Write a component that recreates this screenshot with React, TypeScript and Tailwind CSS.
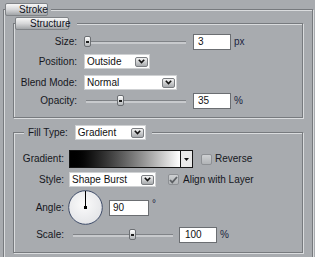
import React from 'react';

const fieldsetCls =
  'm-0 min-w-0 border border-[#777a7e] p-0 shadow-[inset_1px_1px_0_#dadcde,1px_1px_0_#dadcde]';

const TabButton = ({ children, className }: { children: React.ReactNode; className: string }) => (
  <div
    className={`flex h-[13px] items-center whitespace-nowrap rounded-[2px] border border-[#808387] bg-linear-to-b from-[#f8f8f8] via-[#d6d7d9] to-[#a2a5a8] text-[10px] text-[#10131c] ${className}`}
  >
    {children}
  </div>
);

const ArrowButton = () => (
  <span className="flex h-[10px] w-[13px] items-center justify-center rounded-[2px] border border-[#7b7e82] bg-linear-to-b from-[#f4f4f4] to-[#a8abae]">
    <svg width="7" height="5" viewBox="0 0 7 5">
      <path d="M0.8 0.8 L3.5 3.6 L6.2 0.8" stroke="#111" strokeWidth="1.6" fill="none" />
    </svg>
  </span>
);

const Select = ({ value, className }: { value: string; className: string }) => (
  <div className={`flex h-[15px] items-center justify-between border border-[#cfd1d3] bg-white pl-[2px] pr-[1px] ${className}`}>
    <span className="text-[10px] text-[#111]">{value}</span>
    <ArrowButton />
  </div>
);

const Slider = ({ pos, className }: { pos: number; className: string }) => (
  <div className={`relative h-[12px] w-[102px] ${className}`}>
    <div className="absolute left-[2px] right-0 top-[5px] h-[3px] border-t border-[#808387] bg-[#c8cacd]" />
    <div
      className="absolute top-0 flex h-[11px] w-[7px] items-center rounded-[2px] border border-[#6c6f73] bg-linear-to-b from-white to-[#b3b6b9] px-[1px]"
      style={{ left: pos }}
    >
      <div className="h-[2px] w-full bg-[#1d1d1d]" />
    </div>
  </div>
);

const Field = ({ value, className }: { value: string; className: string }) => (
  <div className={`flex h-[16px] items-center border border-[#6b6e72] bg-white text-[10px] text-[#111] ${className}`}>
    {value}
  </div>
);

const Checkbox = ({ checked, className }: { checked?: boolean; className: string }) => (
  <span
    className={`flex h-[11px] w-[11px] items-center justify-center rounded-[2px] border border-[#8d9094] bg-linear-to-b from-[#cfd1d3] to-[#b0b3b6] ${className}`}
  >
    {checked && (
      <svg width="9" height="8" viewBox="0 0 9 8">
        <path d="M1 4 L3.3 6.4 L8 1" stroke="#5d6064" strokeWidth="1.8" fill="none" />
      </svg>
    )}
  </span>
);

export default function App() {
  return (
    <div className="h-[257px] w-[315px] overflow-hidden bg-[#a8abaf] font-['Liberation_Sans',Arial,sans-serif] text-[10px] leading-none text-[#15171d]">
      <fieldset className={`ml-[3px] mt-[3px] w-[310px] pb-[14px] ${fieldsetCls}`}>
        <legend className="ml-[1px] bg-[#a8abaf] p-0 pr-[3px]">
          <TabButton className="w-[43px] pl-[13px]">Stroke</TabButton>
        </legend>

        {/* Structure */}
        <fieldset className={`ml-[9px] mt-[1px] w-[290px] pb-[8px] ${fieldsetCls}`}>
          <legend className="ml-[1px] bg-[#a8abaf] p-0 pr-[8px]">
            <TabButton className="w-[54px] pl-[14px]">Structure</TabButton>
          </legend>

          <div className="mt-[4px] flex h-[16px] items-center">
            <span className="w-[63px] text-right">Size:</span>
            <Slider pos={0} className="ml-[7px]" />
            <Field value="3" className="ml-[7px] w-[38px] pl-[4px]" />
            <span className="ml-[3px] text-[#1b2440]">px</span>
          </div>

          <div className="mt-[4px] flex h-[15px] items-center">
            <span className="w-[63px] text-right">Position:</span>
            <Select value="Outside" className="ml-[7px] w-[66px]" />
          </div>

          <div className="mt-[6px] flex h-[15px] items-center">
            <span className="w-[63px] text-right">Blend Mode:</span>
            <Select value="Normal" className="ml-[7px] w-[93px]" />
          </div>

          <div className="mt-[3px] flex h-[16px] items-center">
            <span className="w-[63px] text-right">Opacity:</span>
            <Slider pos={33} className="ml-[7px]" />
            <Field value="35" className="ml-[7px] w-[38px] pl-[4px]" />
            <span className="ml-[3px] text-[#1b2440]">%</span>
          </div>
        </fieldset>

        {/* Fill */}
        <fieldset className={`ml-[9px] mt-[7px] w-[290px] pb-[9px] ${fieldsetCls}`}>
          <legend className="ml-[10px] flex items-center bg-[#a8abaf] p-0 pl-[4px] pr-[6px]">
            <span>Fill Type:</span>
            <Select value="Gradient" className="ml-[7px] w-[71px]" />
          </legend>

          <div className="mt-[10px] flex h-[18px] items-center">
            <span className="w-[50px] text-right">Gradient:</span>
            <div className="ml-[5px] flex h-[18px] w-[124px] border border-[#151515] bg-[#e9e9e9]">
              <div className="h-full flex-1 border-r border-[#151515] bg-linear-to-r from-black to-white" />
              <div className="flex w-[11px] items-center justify-center">
                <svg width="5" height="3" viewBox="0 0 5 3">
                  <path d="M0 0 H5 L2.5 3 Z" fill="#111" />
                </svg>
              </div>
            </div>
            <Checkbox className="ml-[8px]" />
            <span className="ml-[3px]">Reverse</span>
          </div>

          <div className="mt-[4px] flex h-[15px] items-center">
            <span className="w-[50px] text-right">Style:</span>
            <Select value="Shape Burst" className="ml-[5px] w-[87px]" />
            <Checkbox checked className="ml-[12px]" />
            <span className="ml-[4px]">Align with Layer</span>
          </div>

          <div className="mt-[3px] flex h-[35px] items-center">
            <span className="w-[50px] text-right">Angle:</span>
            <svg width="35" height="35" viewBox="0 0 35 35" className="ml-[4px]">
              <defs>
                <radialGradient id="dial" cx="0.45" cy="0.4" r="0.6">
                  <stop offset="0" stopColor="#fbfbfb" />
                  <stop offset="1" stopColor="#e4e5e8" />
                </radialGradient>
              </defs>
              <circle cx="17.5" cy="17.5" r="16.8" fill="url(#dial)" stroke="#3d4b68" strokeWidth="1" />
              <line x1="17.5" y1="17.5" x2="17.5" y2="1" stroke="#000" strokeWidth="1" />
              <rect x="16" y="16" width="3" height="3" fill="#000" />
            </svg>
            <Field value="90" className="ml-[6px] w-[40px] pl-[3px]" />
            <span className="ml-[3px] self-start mt-[9px] text-[#1b2440]">°</span>
          </div>

          <div className="mt-[2px] flex h-[16px] items-center">
            <span className="w-[50px] text-right">Scale:</span>
            <Slider pos={58} className="ml-[7px]" />
            <Field value="100" className="ml-[6px] w-[38px] pl-[5px]" />
            <span className="ml-[3px] text-[#1b2440]">%</span>
          </div>
        </fieldset>
      </fieldset>
    </div>
  );
}
